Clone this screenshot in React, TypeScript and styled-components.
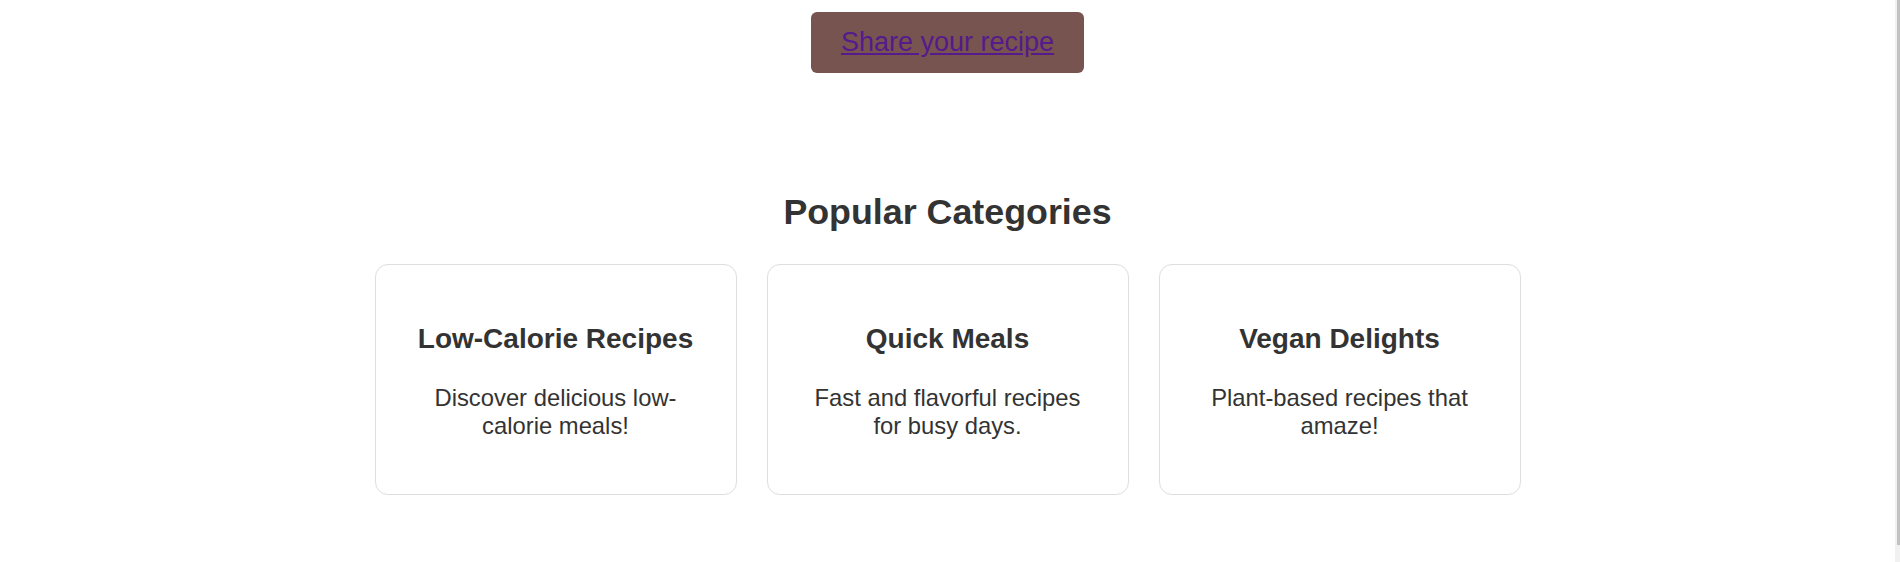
import React from "react";
import styled, { createGlobalStyle } from "styled-components";

const GlobalStyle = createGlobalStyle`
  html, body {
    margin: 0;
    padding: 0;
    background: #ffffff;
    overflow: hidden;
  }
  body {
    font-family: "Liberation Sans", Arial, sans-serif;
    color: #333333;
  }
  *, *::before, *::after {
    box-sizing: border-box;
  }
`;

const Shell = styled.div`
  display: flex;
  height: 100vh;
  overflow: hidden;
`;

const Page = styled.main`
  flex: 1;
  display: flex;
  flex-direction: column;
  align-items: center;
  padding: 12px 0 86px;
`;

const ScrollTrack = styled.div`
  flex: 0 0 5px;
  display: flex;
  justify-content: flex-end;
  align-items: flex-start;
  background: #f1f1f1;
`;

const ScrollThumb = styled.div`
  width: 3px;
  height: 545px;
  background: #c1c1c1;
`;

const CtaButton = styled.a`
  flex-shrink: 0;
  display: inline-flex;
  align-items: center;
  justify-content: center;
  height: 61px;
  padding: 0 30px;
  background: #775450;
  border-radius: 6px;
  color: #551a8b;
  font-size: 27px;
  text-decoration: underline;
  cursor: pointer;
`;

const Categories = styled.section`
  flex-shrink: 0;
  margin-top: 119px;
  display: flex;
  flex-direction: column;
  align-items: center;
`;

const Heading = styled.h2`
  margin: 0 0 31px;
  font-size: 35.8px;
  font-weight: 700;
  color: #333333;
  text-align: center;
`;

const CardGrid = styled.div`
  display: grid;
  grid-template-columns: repeat(3, 362px);
  gap: 30px;
  justify-content: center;
`;

const Card = styled.article`
  width: 362px;
  padding: 33px 40px 33px;
  border: 1px solid #dedede;
  border-radius: 13px;
  background: #ffffff;
  text-align: center;
`;

const CardTitle = styled.h3`
  margin: 25px 0 29px;
  font-size: 28px;
  font-weight: 700;
  color: #333333;
`;

const CardText = styled.p`
  margin: 0 0 21px;
  font-size: 23.8px;
  color: #333333;
`;

const categories = [
  { title: "Low-Calorie Recipes", text: "Discover delicious low-calorie meals!" },
  { title: "Quick Meals", text: "Fast and flavorful recipes for busy days." },
  { title: "Vegan Delights", text: "Plant-based recipes that amaze!" },
];

export default function App() {
  return (
    <>
      <GlobalStyle />
      <Shell>
        <Page>
          <CtaButton href="#share">Share your recipe</CtaButton>
          <Categories>
            <Heading>Popular Categories</Heading>
            <CardGrid>
              {categories.map((c) => (
                <Card key={c.title}>
                  <CardTitle>{c.title}</CardTitle>
                  <CardText>{c.text}</CardText>
                </Card>
              ))}
            </CardGrid>
          </Categories>
        </Page>
        <ScrollTrack aria-hidden="true">
          <ScrollThumb />
        </ScrollTrack>
      </Shell>
    </>
  );
}
